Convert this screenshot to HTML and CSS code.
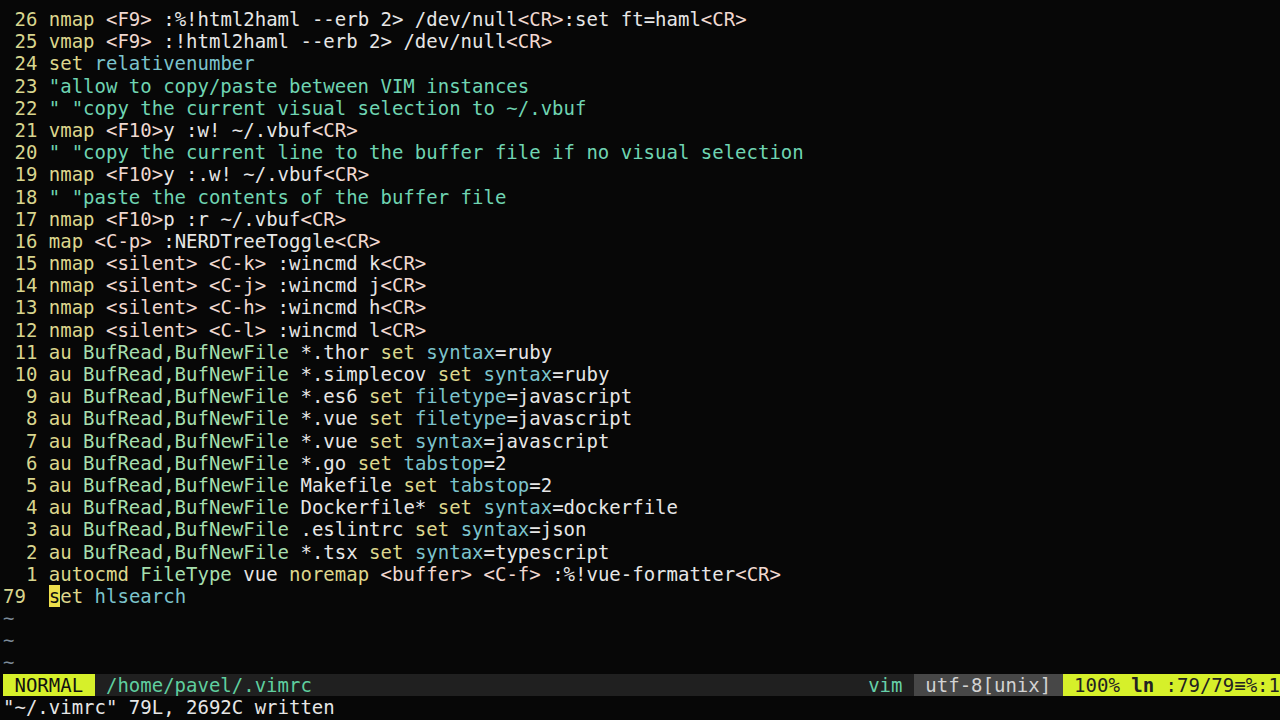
FILE: index.html
```html
<!DOCTYPE html>
<html>
<head>
<meta charset="utf-8">
<link rel="stylesheet" href="styles.css">
</head>
<body>
<div class="term">
<div class="buf">
<div class="row"><span class="n"> 26 </span><span class="k">nmap</span> <span class="s">&lt;F9&gt;</span> :%!html2haml --erb 2&gt; /dev/null<span class="s">&lt;CR&gt;</span>:set ft=haml<span class="s">&lt;CR&gt;</span></div>
<div class="row"><span class="n"> 25 </span><span class="k">vmap</span> <span class="s">&lt;F9&gt;</span> :!html2haml --erb 2&gt; /dev/null<span class="s">&lt;CR&gt;</span></div>
<div class="row"><span class="n"> 24 </span><span class="k">set</span> <span class="o">relativenumber</span></div>
<div class="row"><span class="n"> 23 </span><span class="c">"allow to copy/paste between VIM instances</span></div>
<div class="row"><span class="n"> 22 </span><span class="c">" "copy the current visual selection to ~/.vbuf</span></div>
<div class="row"><span class="n"> 21 </span><span class="k">vmap</span> <span class="s">&lt;F10&gt;</span>y :w! ~/.vbuf<span class="s">&lt;CR&gt;</span></div>
<div class="row"><span class="n"> 20 </span><span class="c">" "copy the current line to the buffer file if no visual selection</span></div>
<div class="row"><span class="n"> 19 </span><span class="k">nmap</span> <span class="s">&lt;F10&gt;</span>y :.w! ~/.vbuf<span class="s">&lt;CR&gt;</span></div>
<div class="row"><span class="n"> 18 </span><span class="c">" "paste the contents of the buffer file</span></div>
<div class="row"><span class="n"> 17 </span><span class="k">nmap</span> <span class="s">&lt;F10&gt;</span>p :r ~/.vbuf<span class="s">&lt;CR&gt;</span></div>
<div class="row"><span class="n"> 16 </span><span class="k">map</span> <span class="s">&lt;C-p&gt;</span> :NERDTreeToggle<span class="s">&lt;CR&gt;</span></div>
<div class="row"><span class="n"> 15 </span><span class="k">nmap</span> <span class="s">&lt;silent&gt;</span> <span class="s">&lt;C-k&gt;</span> :wincmd k<span class="s">&lt;CR&gt;</span></div>
<div class="row"><span class="n"> 14 </span><span class="k">nmap</span> <span class="s">&lt;silent&gt;</span> <span class="s">&lt;C-j&gt;</span> :wincmd j<span class="s">&lt;CR&gt;</span></div>
<div class="row"><span class="n"> 13 </span><span class="k">nmap</span> <span class="s">&lt;silent&gt;</span> <span class="s">&lt;C-h&gt;</span> :wincmd h<span class="s">&lt;CR&gt;</span></div>
<div class="row"><span class="n"> 12 </span><span class="k">nmap</span> <span class="s">&lt;silent&gt;</span> <span class="s">&lt;C-l&gt;</span> :wincmd l<span class="s">&lt;CR&gt;</span></div>
<div class="row"><span class="n"> 11 </span><span class="k">au</span> <span class="g">BufRead,BufNewFile</span> *.thor <span class="k">set</span> <span class="o">syntax</span>=ruby</div>
<div class="row"><span class="n"> 10 </span><span class="k">au</span> <span class="g">BufRead,BufNewFile</span> *.simplecov <span class="k">set</span> <span class="o">syntax</span>=ruby</div>
<div class="row"><span class="n">  9 </span><span class="k">au</span> <span class="g">BufRead,BufNewFile</span> *.es6 <span class="k">set</span> <span class="o">filetype</span>=javascript</div>
<div class="row"><span class="n">  8 </span><span class="k">au</span> <span class="g">BufRead,BufNewFile</span> *.vue <span class="k">set</span> <span class="o">filetype</span>=javascript</div>
<div class="row"><span class="n">  7 </span><span class="k">au</span> <span class="g">BufRead,BufNewFile</span> *.vue <span class="k">set</span> <span class="o">syntax</span>=javascript</div>
<div class="row"><span class="n">  6 </span><span class="k">au</span> <span class="g">BufRead,BufNewFile</span> *.go <span class="k">set</span> <span class="o">tabstop</span>=2</div>
<div class="row"><span class="n">  5 </span><span class="k">au</span> <span class="g">BufRead,BufNewFile</span> Makefile <span class="k">set</span> <span class="o">tabstop</span>=2</div>
<div class="row"><span class="n">  4 </span><span class="k">au</span> <span class="g">BufRead,BufNewFile</span> Dockerfile* <span class="k">set</span> <span class="o">syntax</span>=dockerfile</div>
<div class="row"><span class="n">  3 </span><span class="k">au</span> <span class="g">BufRead,BufNewFile</span> .eslintrc <span class="k">set</span> <span class="o">syntax</span>=json</div>
<div class="row"><span class="n">  2 </span><span class="k">au</span> <span class="g">BufRead,BufNewFile</span> *.tsx <span class="k">set</span> <span class="o">syntax</span>=typescript</div>
<div class="row"><span class="n">  1 </span><span class="k">autocmd</span> <span class="g">FileType</span> vue <span class="k">noremap</span> <span class="s">&lt;buffer&gt;</span> <span class="s">&lt;C-f&gt;</span> :%!vue-formatter<span class="s">&lt;CR&gt;</span></div>
<div class="row"><span class="n">79  </span><span class="k"><span class="cursor">s</span>et</span> <span class="o">hlsearch</span></div>
<div class="row tilde">~</div>
<div class="row tilde">~</div>
<div class="row tilde">~</div>
</div>
<div class="status"><span class="seg mode"> NORMAL </span><span class="seg file"> /home/pavel/.vimrc</span><span class="seg ft">vim </span><span class="seg enc"> utf-8[unix] </span><span class="seg pos"> 100% <b>ln</b> :79/79≡%:1</span></div>
<div class="row cmd">"~/.vimrc" 79L, 2692C written</div>
</div>
</body>
</html>
```
FILE: styles.css
```css
html, body {
  margin: 0;
  padding: 0;
  background: #070707;
}
body {
  width: 1280px;
  height: 720px;
  overflow: hidden;
}
.term {
  padding: 8px 0 0 3px;
  font-family: "DejaVu Sans Mono", "Liberation Mono", monospace;
  font-size: 19px;
  line-height: 22.2px;
  color: #e6e6e6;
}
.row {
  height: 22.2px;
  white-space: pre;
}
.n { color: #d8d58e; }
.k { color: #dcd68c; }
.s { color: #f0d8d0; }
.c { color: #6fd4b2; }
.o { color: #7cc3cc; }
.g { color: #a6dfae; }
.tilde { color: #7d8b99; }
.cursor {
  background: #ecdf4c;
  color: #111;
}
.status {
  display: flex;
  height: 22.2px;
}
.seg {
  display: block;
  white-space: pre;
}
.mode {
  background: #d6f02a;
  color: #111;
}
.file {
  flex: 1;
  background: #202020;
  color: #5fcf9f;
}
.ft {
  background: #202020;
  color: #66d0a8;
}
.enc {
  background: #474747;
  color: #d2d2d2;
}
.pos {
  background: #d6f02a;
  color: #222;
}
.pos b {
  font-weight: bold;
}
.cmd {
  color: #e6e6e6;
}
```
